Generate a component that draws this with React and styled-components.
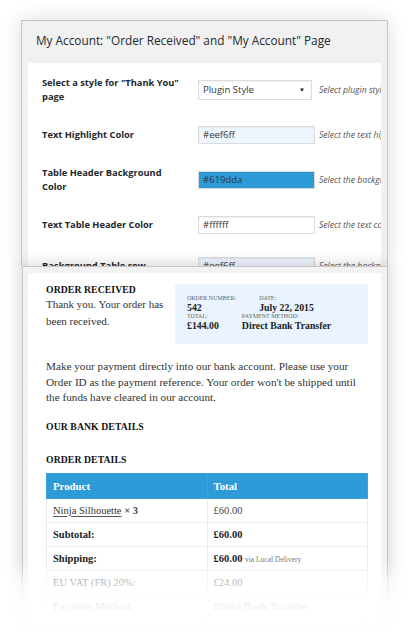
import React from 'react'
import styled, { createGlobalStyle } from 'styled-components'

const GlobalStyle = createGlobalStyle`
  html, body {
    margin: 0;
    padding: 0;
    background: #fff;
  }
  body {
    width: 413px;
    height: 644px;
    overflow: hidden;
  }
`

const Stage = styled.div`
  position: relative;
  width: 413px;
  height: 644px;
  box-sizing: border-box;
  padding: 20px 0 0 21px;
`

// top card: plugin settings
const SettingsPanel = styled.section`
  width: 367px;
  height: 246px;
  box-sizing: border-box;
  border: 1px solid #c6c6c6;
  border-bottom: none;
  background: #f1f1f1;
  padding: 0 6px;
  overflow: hidden;
  display: flex;
  flex-direction: column;
  box-shadow: 0 0 18px rgba(0, 0, 0, 0.15);
  font-family: 'Open Sans', sans-serif;
`

const PanelTitle = styled.h2`
  margin: 0;
  height: 42px;
  line-height: 39px;
  padding-left: 8px;
  font-size: 11.8px;
  font-weight: 400;
  color: #23282d;
  white-space: nowrap;
`

const SettingsBody = styled.div`
  flex: 1;
  background: #fff;
  padding: 2px 0 0 14px;
  overflow: hidden;
`

const SettingRow = styled.div`
  display: grid;
  grid-template-columns: 156px 117px 1fr;
  grid-auto-rows: minmax(20px, auto);
  align-items: center;
  padding: 11px 0 10px;
`

const Label = styled.div`
  max-width: 145px;
  font-size: 9.3px;
  line-height: 14px;
  font-weight: 700;
  color: #23282d;
`

const ColorInput = styled.div`
  box-sizing: border-box;
  width: ${(p) => p.$width || 117}px;
  height: ${(p) => p.$height || 18}px;
  border: 1px solid #dcdcdc;
  box-shadow: inset 0 1px 2px rgba(0, 0, 0, 0.07);
  background: ${(p) => p.$bg || '#fff'};
  padding: 0 4px;
  font-size: 9.5px;
  line-height: 16px;
  color: #32373c;
  display: flex;
  align-items: center;
  justify-content: space-between;
`

const Caret = styled.span`
  font-size: 6px;
  color: #222;
  margin-right: 2px;
`

const Help = styled.span`
  margin-left: 4px;
  font-size: 8.6px;
  font-style: italic;
  color: #555;
  white-space: nowrap;
  overflow: hidden;
`

// bottom card: the thank-you page preview
const ReceiptPanel = styled.section`
  position: relative;
  z-index: 1;
  width: 366px;
  box-sizing: border-box;
  margin-left: 1px;
  border: 1px solid #c6c6c6;
  background: #f2f2f2;
  padding: 6px 6px 4px 5px;
  box-shadow: 0 0 16px rgba(0, 0, 0, 0.2);
  font-family: 'Liberation Serif', serif;
  color: #333;
`

const ReceiptBody = styled.div`
  background: #fff;
  padding: 11px 13px 4px 18px;
`

const ReceiptTop = styled.div`
  display: flex;
  justify-content: space-between;
  align-items: flex-start;
`

const Intro = styled.div`
  width: 124px;
`

const Heading = styled.h3`
  margin: ${(p) => p.$mt || 0}px 0 0;
  font-size: 9.7px;
  line-height: 12px;
  font-weight: 700;
  color: #111;
  letter-spacing: 0.1px;
`

const IntroText = styled.p`
  margin: 0;
  font-size: 11px;
  line-height: 17px;
  color: #333;
`

const OrderBox = styled.div`
  width: 193px;
  height: 60px;
  box-sizing: border-box;
  background: #eaf4fe;
  padding: 11px 0 0 12px;
`

const MetaRow = styled.div`
  display: flex;
  gap: 23px;
`

const MetaItem = styled.div`
  display: flex;
  flex-direction: column;
`

const MetaLabel = styled.span`
  font-size: 6px;
  line-height: 7px;
  text-transform: uppercase;
  color: #666;
`

const MetaValue = styled.span`
  font-size: 9.8px;
  line-height: 11px;
  font-weight: 700;
  color: #222;
`

const Paragraph = styled.p`
  margin: 15px 0 0;
  font-size: 11.2px;
  line-height: 15.5px;
  color: #333;
`

const Table = styled.table`
  width: 322px;
  margin-top: 7px;
  border-collapse: collapse;
  border: 1px solid #ececec;
  font-size: 10.5px;
`

const HeadCell = styled.th`
  height: 24px;
  padding: 0 6px;
  width: 50%;
  text-align: left;
  background: #2e9bd9;
  color: #fff;
  font-weight: 700;
  font-size: 10.8px;
  border: 1px solid #3aa2dd;
`

const Cell = styled.td`
  height: 23px;
  padding: 0 6px;
  border: 1px solid #ececec;
  font-weight: ${(p) => (p.$bold ? 700 : 400)};
  color: ${(p) => (p.$bold ? '#222' : '#444')};
`

const ProductLink = styled.span`
  color: #333;
  text-decoration: underline;
  text-decoration-color: #555;
  text-underline-offset: 2px;
`

const Note = styled.span`
  font-size: 7.5px;
  font-weight: 400;
  color: #777;
`

const Fade = styled.div`
  position: absolute;
  left: 0;
  right: 0;
  top: 562px;
  height: 82px;
  z-index: 2;
  pointer-events: none;
  background: linear-gradient(
    to bottom,
    rgba(255, 255, 255, 0) 0%,
    rgba(255, 255, 255, 0.64) 24%,
    rgba(255, 255, 255, 0.95) 54%,
    rgba(255, 255, 255, 0.97) 76%,
    #fff 100%
  );
`

const settings = [
  { label: 'Select a style for "Thank You" page', value: 'Plugin Style', help: 'Select plugin style', select: true },
  { label: 'Text Highlight Color', value: '#eef6ff', bg: '#eef6ff', help: 'Select the text highlight color' },
  { label: 'Table Header Background Color', value: '#619dda', bg: '#2e9bd9', help: 'Select the background color' },
  { label: 'Text Table Header Color', value: '#ffffff', help: 'Select the text color' },
  { label: 'Background Table row', value: '#eef6ff', bg: '#eef6ff', help: 'Select the background color' }
]

const rows = [
  { label: <><ProductLink>Ninja Silhouette</ProductLink> <b>× 3</b></>, total: '£60.00' },
  { label: 'Subtotal:', total: '£60.00', bold: true },
  { label: 'Shipping:', total: <>£60.00 <Note>via Local Delivery</Note></>, bold: true },
  { label: 'EU VAT (FR) 20%:', total: '£24.00' },
  { label: 'Payment Method:', total: 'Direct Bank Transfer', bold: true }
]

export default function App() {
  return (
    <Stage>
      <GlobalStyle />
      <SettingsPanel>
        <PanelTitle>My Account: "Order Received" and "My Account" Page</PanelTitle>
        <SettingsBody>
          {settings.map((s) => (
            <SettingRow key={s.label}>
              <Label>{s.label}</Label>
              {s.select ? (
                <ColorInput $width={114} $height={20}>
                  {s.value}
                  <Caret>▼</Caret>
                </ColorInput>
              ) : (
                <ColorInput $bg={s.bg}>{s.value}</ColorInput>
              )}
              <Help>{s.help}</Help>
            </SettingRow>
          ))}
        </SettingsBody>
      </SettingsPanel>

      <ReceiptPanel>
        <ReceiptBody>
          <ReceiptTop>
            <Intro>
              <Heading>ORDER RECEIVED</Heading>
              <IntroText>Thank you. Your order has been received.</IntroText>
            </Intro>
            <OrderBox>
              <MetaRow>
                <MetaItem>
                  <MetaLabel>Order Number:</MetaLabel>
                  <MetaValue>542</MetaValue>
                </MetaItem>
                <MetaItem>
                  <MetaLabel>Date:</MetaLabel>
                  <MetaValue>July 22, 2015</MetaValue>
                </MetaItem>
              </MetaRow>
              <MetaRow>
                <MetaItem>
                  <MetaLabel>Total:</MetaLabel>
                  <MetaValue>£144.00</MetaValue>
                </MetaItem>
                <MetaItem>
                  <MetaLabel>Payment Method:</MetaLabel>
                  <MetaValue>Direct Bank Transfer</MetaValue>
                </MetaItem>
              </MetaRow>
            </OrderBox>
          </ReceiptTop>

          <Paragraph>
            Make your payment directly into our bank account. Please use your Order ID as the
            payment reference. Your order won't be shipped until the funds have cleared in our
            account.
          </Paragraph>

          <Heading $mt={15}>OUR BANK DETAILS</Heading>
          <Heading $mt={21}>ORDER DETAILS</Heading>

          <Table>
            <thead>
              <tr>
                <HeadCell>Product</HeadCell>
                <HeadCell>Total</HeadCell>
              </tr>
            </thead>
            <tbody>
              {rows.map((r, i) => (
                <tr key={i}>
                  <Cell $bold={r.bold}>{r.label}</Cell>
                  <Cell $bold={r.bold}>{r.total}</Cell>
                </tr>
              ))}
            </tbody>
          </Table>
        </ReceiptBody>
      </ReceiptPanel>
      <Fade />
    </Stage>
  )
}
